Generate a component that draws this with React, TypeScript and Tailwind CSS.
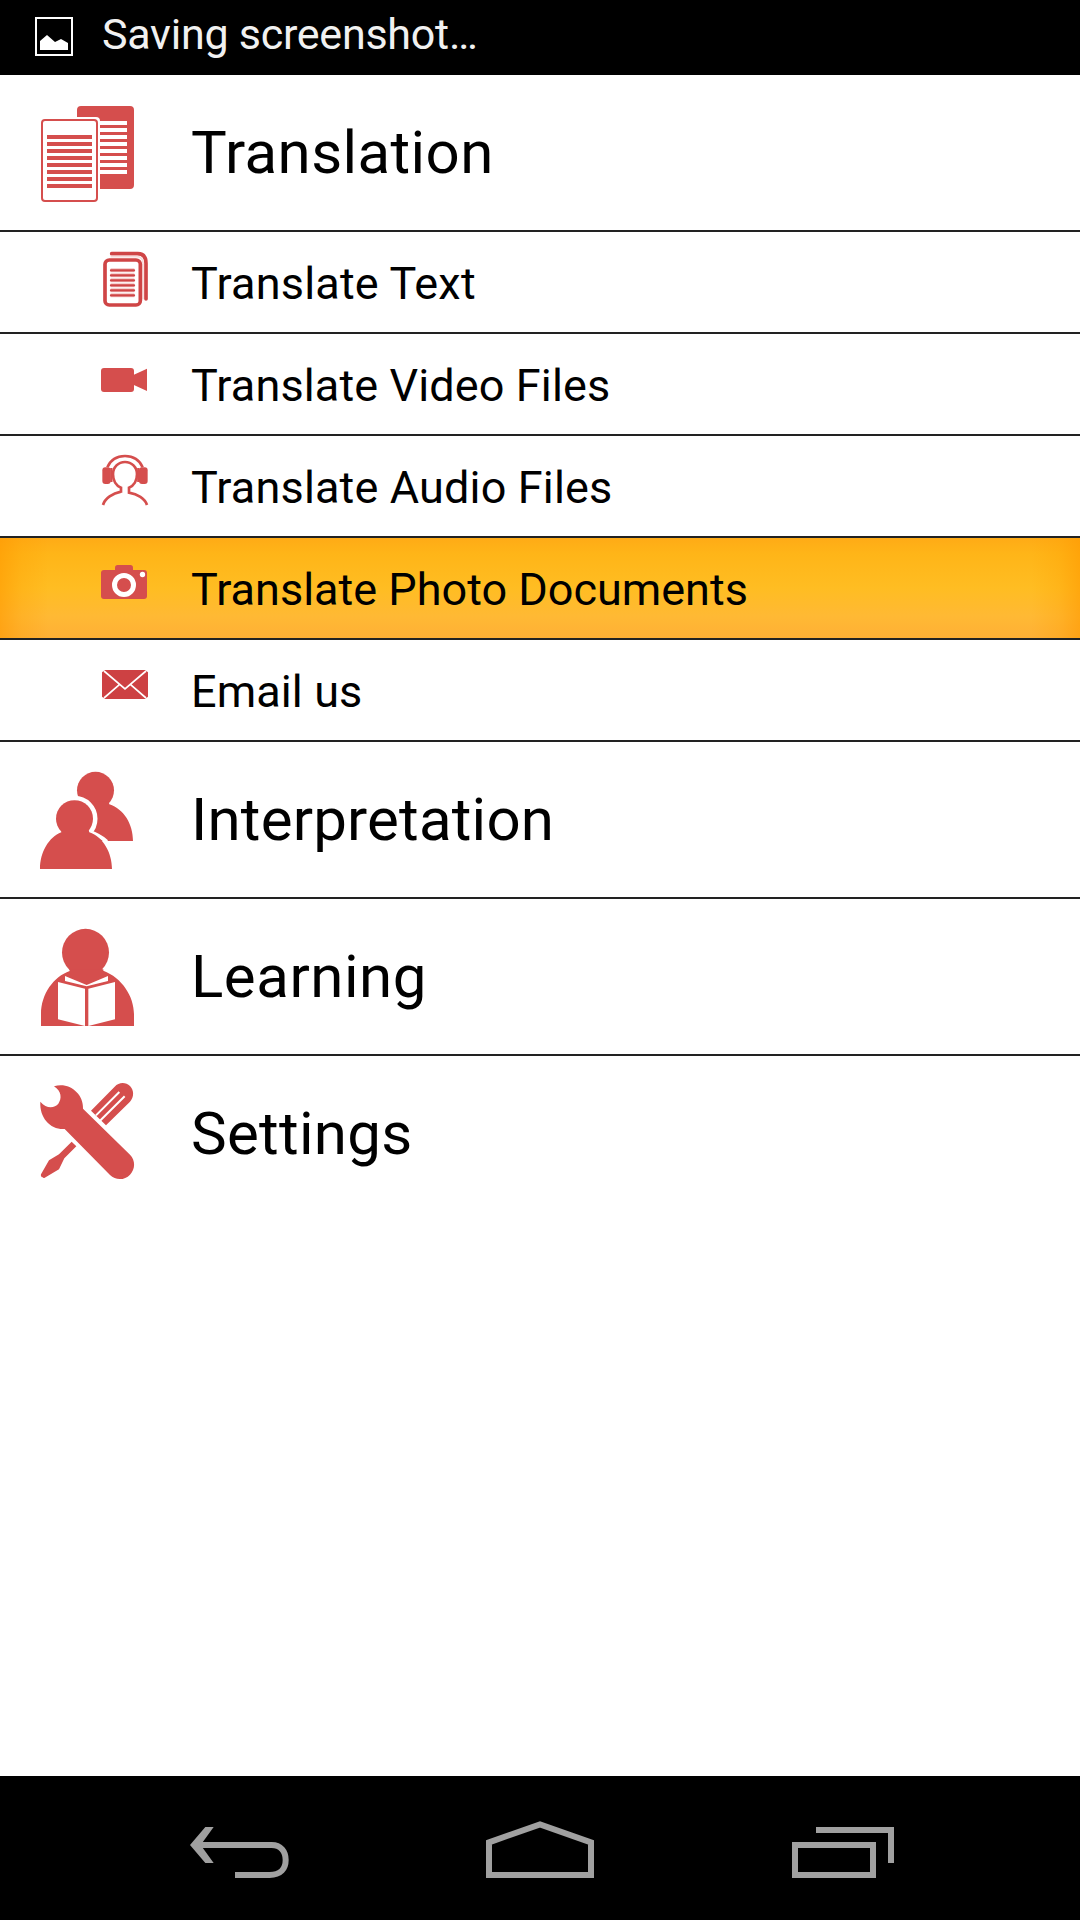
import React from "react";

const RED = "#d54e4d";

function DocumentsIcon() {
  return (
    <svg className="h-[155px] w-[140px] shrink-0" viewBox="0 -45 420 465" fill={RED}>
      <path d="M171 81V60q0-12 12-12h147q12 0 12 12v225q0 12-12 12h-90V93q0-12-12-12z" />
      {[93, 114, 135, 156, 177, 198, 219, 240].map((y) => (
        <rect key={y} x="240" y={y} width="81" height="12" fill="#fff" />
      ))}
      <rect x="66" y="90" width="165" height="243" rx="9" fill="#fff" stroke={RED} strokeWidth="6" />
      {[135, 156, 177, 198, 219, 240, 261, 282].map((y) => (
        <rect key={y} x="81" y={y} width="135" height="12" />
      ))}
    </svg>
  );
}

function PeopleIcon() {
  return (
    <svg className="h-[155px] w-[140px] shrink-0" viewBox="0 -24 420 465" fill={RED}>
      <circle cx="226.500" cy="121" r="55.500" />
      <path d="M186 155h80l2 8c44 15 71 59 71 110H210z" />
      <g stroke="#fff" strokeWidth="24">
        <circle cx="163.500" cy="206" r="57" />
      </g>
      <path d="M206 245c24 8 42 19 54 30" fill="none" stroke="#fff" strokeWidth="12" />
      <circle cx="163.500" cy="206" r="55.500" />
      <path d="M126 240h80l2 7c42 15 68 62 68 110H60c0-50 26-95 64-110z" />
    </svg>
  );
}

function ReaderIcon() {
  return (
    <svg className="h-[155px] w-[140px] shrink-0" viewBox="0 -33 420 465" fill={RED}>
      <ellipse cx="196.500" cy="127.500" rx="70.500" ry="71" />
      <path d="M148 178h102v4c56 21 92 77 92 130v36H63v-36c0-60 38-112 86-129z" />
      <g fill="#fff">
        <path d="M135 198l65 27 64-27v15l-64 16-65-16z" />
        <path d="M114 216l81 20v112l-81-20zM285 216l-80 20v112l80-20z" />
      </g>
    </svg>
  );
}

function ToolsIcon() {
  return (
    <svg className="h-[155px] w-[140px] shrink-0" viewBox="0 -12 420 465" fill={RED}>
      <path d="M102 79c45-14 89 22 87 67L330 284c17 18 16 43 0 60s-43 18-60 1L134 207c-42 3-76-33-73-82 19 23 43 19 54 6 11-15 10-38-13-52z" />
      <path d="M213 152l71-72c13-15 34-14 46-2s13 33 0 47l-72 71z" />
      <path d="M228 166l70-70M240 182l74-73" fill="none" stroke="#fff" strokeWidth="6" />
      <path d="M155 245l14 14-36 36-16 33-44 26c-6 1-12-5-10-11l24-42 30-18z" />
    </svg>
  );
}

function TextIcon() {
  return (
    <svg className="size-[100px] shrink-0" viewBox="0 21 300 300" fill="none" stroke="#cf4546">
      <path d="M95 86h78q25 0 25 29v107" strokeWidth="11" strokeLinecap="round" />
      <path d="M92 95h78q19 0 19 20v108" stroke="#f8dada" strokeWidth="5" />
      <rect x="75" y="105" width="106" height="135" rx="13" strokeWidth="11" />
      <path d="M92 136h71M92 151h71M92 166h71M92 181h71M92 196h71M92 211h71" stroke="#f3c4c4" strokeWidth="12" />
      <path d="M93 136h69M93 151h69M93 166h69M93 181h69M93 196h69M93 211h69" strokeWidth="7" strokeLinecap="round" />
    </svg>
  );
}

function VideoIcon() {
  return (
    <svg className="size-[100px] shrink-0" viewBox="0 327 300 300" fill={RED}>
      <rect x="63" y="429" width="99" height="72" rx="9" />
      <path d="M160 450l41-19v67l-41-19z" />
    </svg>
  );
}

function HeadphonesIcon() {
  return (
    <svg className="size-[100px] shrink-0" viewBox="0 18 300 300" fill="none" stroke={RED} strokeWidth="8">
      <path d="M82 112c10-23 30-34 53-34s43 11 53 34" />
      <path d="M123 188v-15c-15-6-24-22-24-40 0-22 16-37 36-37s36 15 36 37c0 18-9 34-24 40v15c25 4 48 17 54 37M123 185c-25 5-48 20-54 40" />
      <rect x="67" y="112" width="25" height="50" rx="9" fill={RED} stroke="none" />
      <rect x="177" y="112" width="26" height="50" rx="9" fill={RED} stroke="none" />
      <path d="M94 114v42M175 114v42" strokeWidth="7" />
    </svg>
  );
}

function CameraIcon() {
  return (
    <svg className="size-[100px] shrink-0" viewBox="0 324 300 300" fill={RED}>
      <rect x="63" y="420" width="138" height="87" rx="9" />
      <path d="M105 424v-11q0-8 8-8h38q8 0 8 8v11z" />
      <circle cx="132" cy="465" r="28.500" stroke="#fff" strokeWidth="15" />
      <circle cx="187.500" cy="433.500" r="8" fill="#fff" />
    </svg>
  );
}

function MailIcon() {
  return (
    <svg className="size-[100px] shrink-0" viewBox="0 30 300 300">
      <path d="M75 120h120l9 7v73l-9 7H75l-9-7v-73z" fill="#cd4143" />
      <path d="M72 123l63 54 63-54M72 204l47-41M198 204l-47-41" fill="none" stroke="#fff" strokeWidth="5" />
    </svg>
  );
}

type RowProps = { icon: React.ReactNode; label: string; tracking?: string };

function Section({ icon, label, tracking = "tracking-[0.2px]", last }: RowProps & { last?: boolean }) {
  return (
    <div className={last ? "flex items-center" : "flex items-center border-b-2 border-[#222222]"}>
      <div className="ml-5 mr-[31px]">{icon}</div>
      <span className={`text-[60px] leading-[70px] ${tracking}`}>{label}</span>
    </div>
  );
}

function Item({ icon, label, tracking = "tracking-normal", active }: RowProps & { active?: boolean }) {
  return (
    <div
      className={
        active
          ? "flex items-center border-b-2 border-[#222222] bg-[linear-gradient(to_right,rgba(255,153,0,0.6),rgba(255,157,0,0.25)_2%,rgba(255,160,0,0)_4.5%,rgba(255,160,0,0)_95.5%,rgba(255,157,0,0.25)_98%,rgba(255,153,0,0.6)),linear-gradient(to_bottom,#ffab16,#ffb518_16%,#ffbd22_50%,#ffb934_78%,#ffb035)]"
          : "flex items-center border-b-2 border-[#222222]"
      }
    >
      <div className="ml-20 mr-[11px]">{icon}</div>
      <span className={`relative top-px text-[45px] leading-[53px] ${tracking}`}>{label}</span>
    </div>
  );
}

export default function App() {
  return (
    <div className="flex h-[1920px] w-[1080px] flex-col overflow-hidden bg-white font-[Roboto,sans-serif] text-black">
      <header className="flex h-[75px] shrink-0 items-center bg-black">
        <svg className="relative -top-px ml-[35px] h-[39px] w-[38px]" viewBox="0 0 38 39">
          <rect x="1" y="1" width="36" height="37" fill="none" stroke="#fff" strokeWidth="2" />
          <path d="M5 33v-9l7-6 8 7 6-3 7 4v7z" fill="#fff" />
        </svg>
        <span className="relative -top-[3px] ml-[29px] text-[43px] tracking-[-0.25px] text-[#f1f1f1]">
          Saving screenshot…
        </span>
      </header>
      <main className="flex flex-1 flex-col">
        <Section icon={<DocumentsIcon />} label="Translation" tracking="tracking-[0.4px]" />
        <Item icon={<TextIcon />} label="Translate Text" tracking="tracking-[0.2px]" />
        <Item icon={<VideoIcon />} label="Translate Video Files" tracking="tracking-[0.12px]" />
        <Item icon={<HeadphonesIcon />} label="Translate Audio Files" tracking="tracking-[0.15px]" />
        <Item icon={<CameraIcon />} label="Translate Photo Documents" active />
        <Item icon={<MailIcon />} label="Email us" tracking="tracking-[0.1px]" />
        <Section icon={<PeopleIcon />} label="Interpretation" />
        <Section icon={<ReaderIcon />} label="Learning" tracking="tracking-[0.55px]" />
        <Section icon={<ToolsIcon />} label="Settings" tracking="tracking-[0.3px]" last />
      </main>
      <nav className="flex h-36 shrink-0 items-start bg-black pt-[45px]">
        <svg className="ml-[190px] h-[57px] w-[99px]" viewBox="0 0 297 171" fill="none" stroke="#a0a0a0" strokeWidth="18">
          <path d="M25 72h220c27 0 42 19 42 45s-15 45-48 45H135" />
          <path d="M46 18h25L32 72l39 54H46L0 72z" fill="#a0a0a0" stroke="none" />
        </svg>
        <svg className="ml-[197px] h-[57px] w-[108px]" viewBox="0 0 324 171" fill="none" stroke="#a0a0a0" strokeWidth="18">
          <path d="M9 64L162 10l153 54v98H9z" />
        </svg>
        <svg className="ml-[198px] h-[57px] w-[102px]" viewBox="0 0 306 171" fill="none" stroke="#a0a0a0" strokeWidth="18">
          <path d="M72 27h225v99M9 72h234v90H9z" />
        </svg>
      </nav>
    </div>
  );
}
